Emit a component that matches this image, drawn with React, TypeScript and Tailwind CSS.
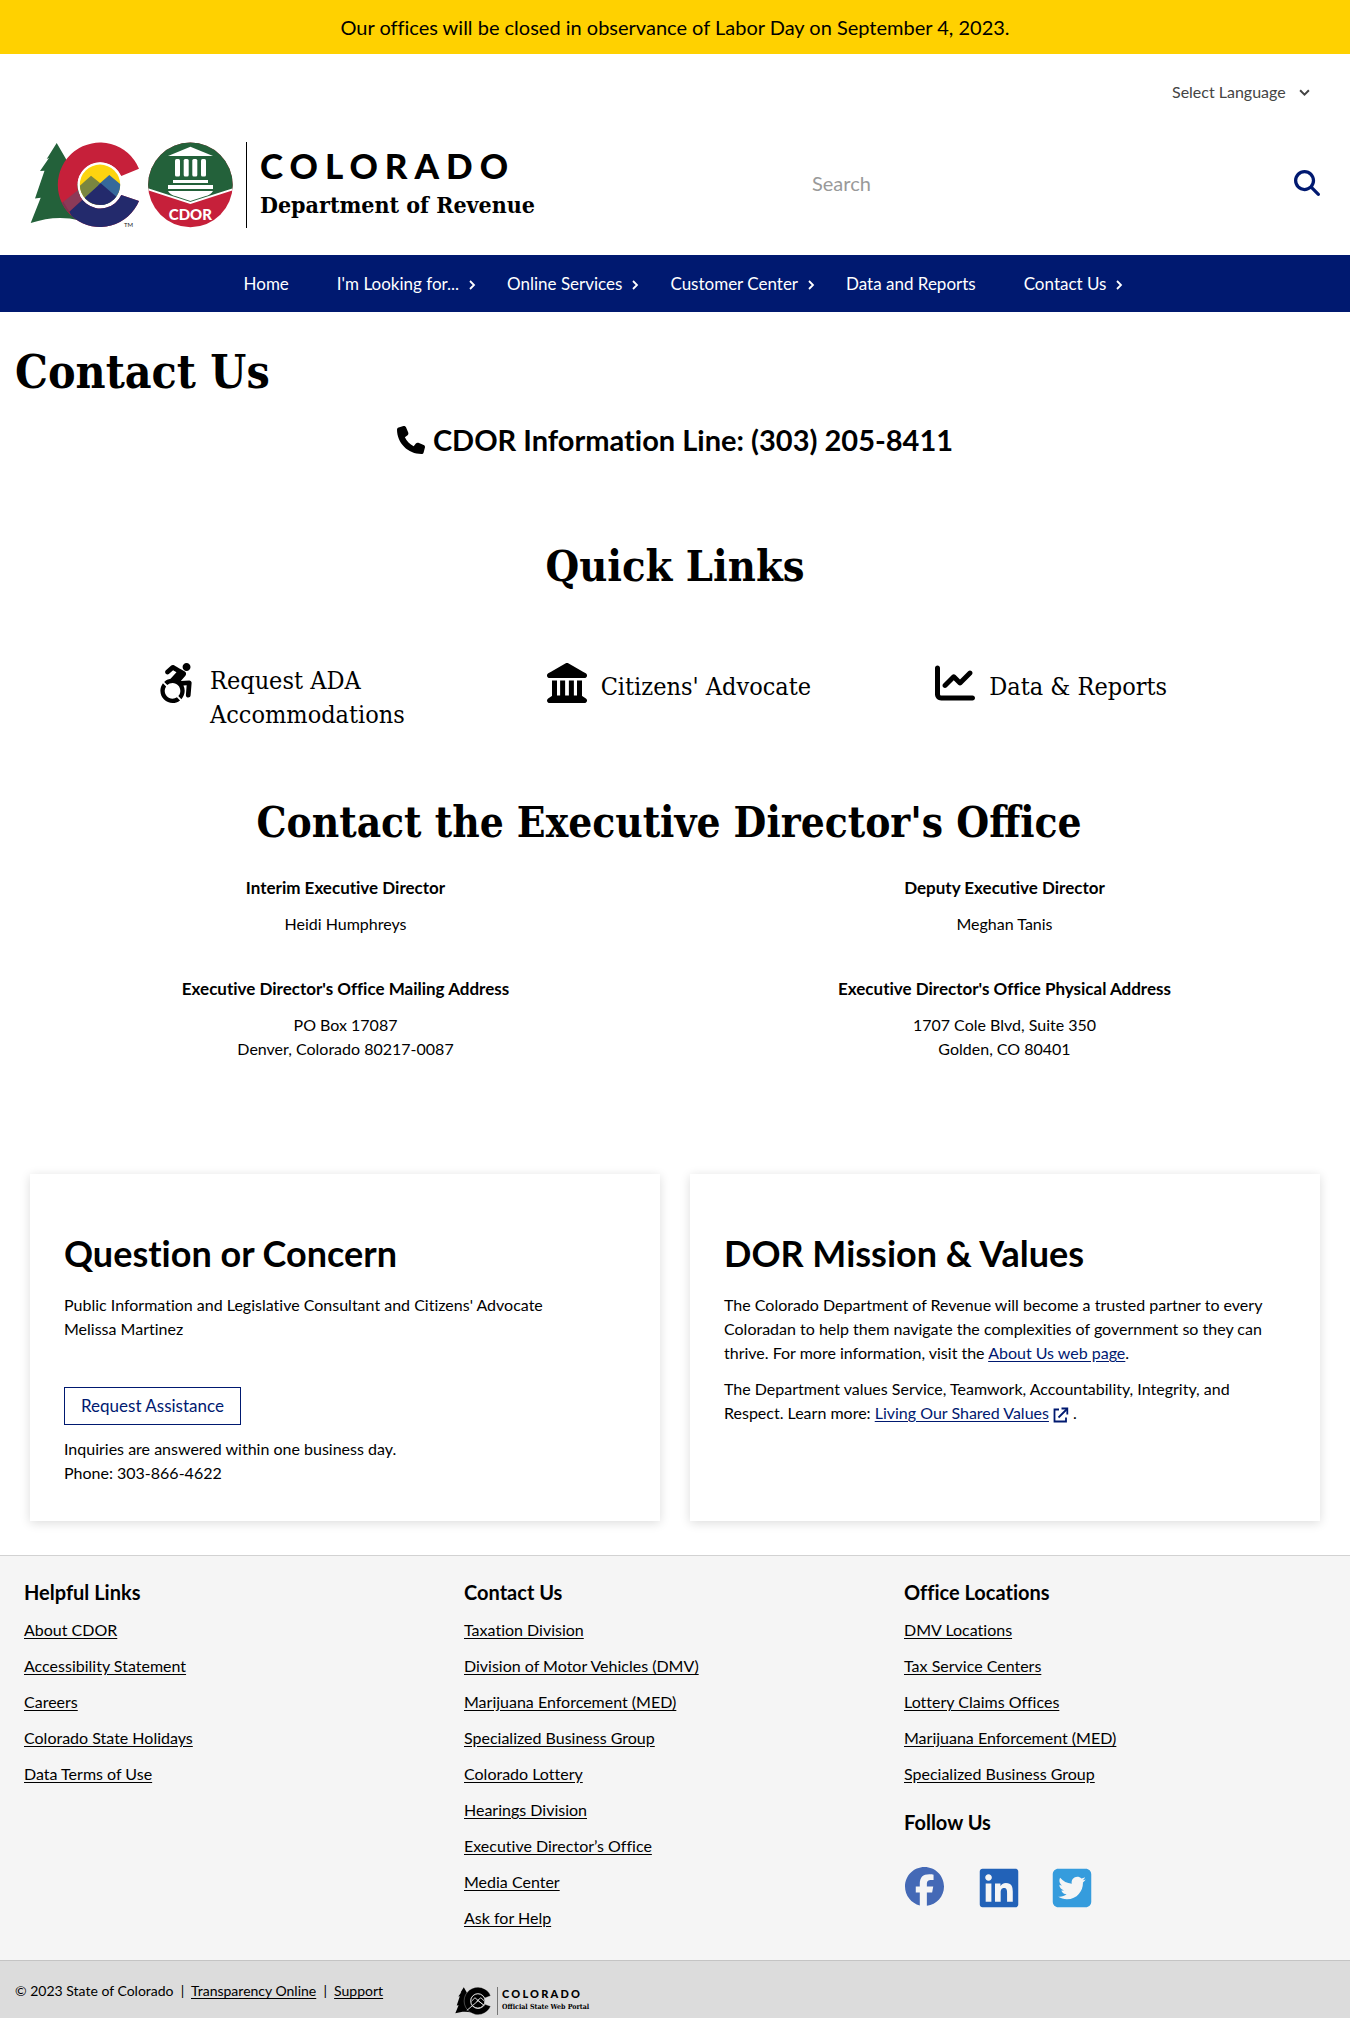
import React from "react";
import {
  FaAccessibleIcon,
  FaChartLine,
  FaFacebook,
  FaLandmark,
  FaLinkedin,
  FaMagnifyingGlass,
  FaPhone,
  FaSquareTwitter,
} from "react-icons/fa6";

const SLAB = "font-['DejaVu_Serif_Condensed','DejaVu_Serif',serif] [font-variant-ligatures:normal]";

const navItems = [
  { label: "Home", menu: false },
  { label: "I'm Looking for...", menu: true },
  { label: "Online Services", menu: true },
  { label: "Customer Center", menu: true },
  { label: "Data and Reports", menu: false },
  { label: "Contact Us", menu: true },
];

const helpfulLinks = [
  "About CDOR",
  "Accessibility Statement",
  "Careers",
  "Colorado State Holidays",
  "Data Terms of Use",
];
const contactLinks = [
  "Taxation Division",
  "Division of Motor Vehicles (DMV)",
  "Marijuana Enforcement (MED)",
  "Specialized Business Group",
  "Colorado Lottery",
  "Hearings Division",
  "Executive Director’s Office",
  "Media Center",
  "Ask for Help",
];
const officeLinks = [
  "DMV Locations",
  "Tax Service Centers",
  "Lottery Claims Offices",
  "Marijuana Enforcement (MED)",
  "Specialized Business Group",
];

const TREE =
  "M26.7 0 L36 16 L50 45 L50 77.5 C32 73 17 75 0.7 80 L10.7 54.7 L5 55.5 L14.5 27.7 L10 28 L19 15 L16.7 16 Z";
const LETTER_C =
  "M109 25.7 A42.2 42.2 0 1 0 109 57.9 L91.3 52 A23 23 0 1 1 91.3 33 Z";

function StateEmblem() {
  return (
    <svg viewBox="0 -1 204 86" className="h-[86px] w-[204px] shrink-0" role="img" aria-label="Colorado CDOR">
      <defs>
        <clipPath id="c-shape">
          <path d={LETTER_C} />
        </clipPath>
        <clipPath id="c-core">
          <circle cx="70" cy="41.8" r="20.2" />
        </clipPath>
        <clipPath id="seal">
          <circle cx="160.4" cy="41.9" r="42.3" />
        </clipPath>
      </defs>
      <path d={TREE} fill="#23613a" />
      <g clipPath="url(#c-shape)">
        <rect x="25" y="-1" width="90" height="86" fill="#c6203a" />
        <path d="M33.3 58.7 L51.7 44.3 L56 54 L39.3 68.7 Z" fill="#8b3a58" />
        <path d="M33.3 58.7 L24 66 L34 73 L39.3 68.7 Z" fill="#7d3352" />
        <path d="M39.3 68.7 L53.3 56 L60 48 L92 48 L118 58 V90 H50 Z" fill="#232a6c" />
      </g>
      <circle cx="70" cy="41.8" r="22.5" fill="#fff" />
      <g clipPath="url(#c-core)">
        <rect x="48" y="20" width="46" height="46" fill="#fdd40f" />
        <path d="M40 51.5 L61 32.7 L75 44 L60 66 H40 Z" fill="#7a8640" />
        <path d="M68 42 L79.3 32 L96 46 V66 H72 Z" fill="#36699a" />
        <path d="M44 64 L53.3 56 L70.7 40.3 L96 62 V68 H44 Z" fill="#232a6c" />
      </g>
      <text x="94" y="83.5" fontSize="6" fontFamily="Lato, sans-serif" fill="#222">TM</text>
      <g clipPath="url(#seal)">
        <rect x="117" y="-1" width="88" height="87" fill="#c6203a" />
        <path d="M117 -1 H204 V46 L160.4 60 L117 46 Z" fill="#23613a" />
        <path d="M117 46 L160.4 60 L204 46" fill="none" stroke="#fff" strokeWidth="2" />
      </g>
      <g fill="#fff">
        <path d="M160.4 3.7 L183 13 H138 Z" />
        <rect x="145" y="16" width="5" height="17.5" rx="1.5" />
        <rect x="153.7" y="16" width="5" height="17.5" rx="1.5" />
        <rect x="162.3" y="16" width="5" height="17.5" rx="1.5" />
        <rect x="171" y="16" width="5" height="17.5" rx="1.5" />
        <rect x="143" y="37" width="35" height="3" />
        <rect x="138" y="42" width="45" height="4" />
        <path d="M138 48 H183 Q181 52 175 53.2 L160.4 58 L146 53.2 Q140 52 138 48 Z" />
      </g>
      <text x="160.4" y="76.5" fontSize="15" fontWeight="900" textAnchor="middle" fontFamily="Lato, sans-serif" fill="#fff">
        CDOR
      </text>
    </svg>
  );
}

function PortalMark() {
  return (
    <svg viewBox="0 -1 110 86" className="h-7 w-9 shrink-0" role="img" aria-label="Colorado">
      <path d={TREE} fill="#000" />
      <path d={LETTER_C} fill="#000" stroke="#dcdcdc" strokeWidth="1" />
      <circle cx="70" cy="41.8" r="22" fill="#000" stroke="#dcdcdc" strokeWidth="3" />
      <path d="M36 71 L71 41 L90 56 M50 43 L61 32 L84 52 M66 43 L79 32 L91 43" fill="none" stroke="#dcdcdc" strokeWidth="3" />
    </svg>
  );
}

function Chevron({ className }: { className: string }) {
  return (
    <svg viewBox="0 0 10 10" className={className} fill="none" stroke="currentColor" strokeWidth="1.8" aria-hidden="true">
      <path d="M3 1 L7 5 L3 9" />
    </svg>
  );
}

function ExternalMark() {
  return (
    <svg viewBox="0 0 16 16" className="mx-1 inline h-4 w-4 align-[-4px]" fill="none" stroke="currentColor" strokeWidth="1.8" aria-label="(external link)">
      <path d="M6 2.5 H1.5 V14.5 H13 V10.5" />
      <path d="M5.5 10.5 L14 2" />
      <path d="M8.5 1.5 H14.3 V7.5" />
    </svg>
  );
}

function LinkList({ links }: { links: string[] }) {
  return (
    <ul className="mt-3 space-y-3">
      {links.map((l) => (
        <li key={l}>
          <a href="#" className="underline underline-offset-2">{l}</a>
        </li>
      ))}
    </ul>
  );
}

function Fact({ title, lines }: { title: string; lines: string[] }) {
  return (
    <div className="text-center">
      <h3 className="mb-3 text-[17px] leading-6 font-bold">{title}</h3>
      {lines.map((l) => (
        <p key={l}>{l}</p>
      ))}
    </div>
  );
}

export default function App() {
  return (
    <div className="bg-white font-[Lato,sans-serif] text-base leading-6 text-black [font-variant-ligatures:no-common-ligatures]">
      <div className="bg-[#ffd100] px-4 py-3 text-center text-xl leading-[30px]">
        Our offices will be closed in observance of Labor Day on September 4, 2023.
      </div>

      <header>
        <div className="flex justify-end pt-[26px] pr-10">
          <div className="relative flex items-center text-[#444]">
            <select aria-label="Select Language" className="appearance-none bg-transparent pr-6 leading-6">
              <option>Select Language</option>
            </select>
            <Chevron className="pointer-events-none absolute right-0 size-[11px] rotate-90" />
          </div>
        </div>
        <div className="flex items-center justify-between px-[30px] pt-[38px] pb-[27px]">
          <a href="#" className="flex items-center">
            <StateEmblem />
            <span className="ml-3 flex h-[86px] flex-col justify-center border-l border-black pl-[13px]">
              <span className="text-[35px] leading-9 font-black tracking-[0.2em]">COLORADO</span>
              <span className={`${SLAB} pt-1 text-[23px] leading-9 font-bold`}>Department of Revenue</span>
            </span>
          </a>
          <form className="flex w-[508px] items-center pb-1" onSubmit={(e) => e.preventDefault()}>
            <input aria-label="Search" placeholder="Search" className="h-12 min-w-0 flex-1 text-xl outline-none placeholder:text-[#999]" />
            <button aria-label="Submit search" className="text-[#001970]">
              <FaMagnifyingGlass className="size-[26px]" />
            </button>
          </form>
        </div>
        <nav className="flex h-[57px] items-center justify-center bg-[#001970] text-[17px] text-white" aria-label="Main">
          {navItems.map((n) => (
            <a key={n.label} href="#" className="relative px-6">
              {n.label}
              {n.menu && <Chevron className="absolute top-2 right-1.5 size-[10px]" />}
            </a>
          ))}
        </nav>
      </header>

      <main>
        <h1 className={`${SLAB} px-[15px] pt-8 text-[46px] leading-[56px] font-bold`}>Contact Us</h1>
        <h2 className="mt-5 flex items-center justify-center gap-2 text-[29px] leading-10 font-bold">
          <FaPhone className="size-7" />
          CDOR Information Line: (303) 205-8411
        </h2>
        <h2 className={`${SLAB} mt-20 text-center text-[43px] leading-[52px] font-bold`}>Quick Links</h2>

        <div className={`${SLAB} mt-[71px] grid grid-cols-3 px-[92px] text-[25px] leading-[34px]`}>
          <a href="#" className="flex items-start gap-3.5 pl-16">
            <FaAccessibleIcon className="size-10 shrink-0" />
            <span className="pt-px">Request ADA Accommodations</span>
          </a>
          <a href="#" className="flex items-start gap-3.5 pl-[66px]">
            <FaLandmark className="size-10 shrink-0" />
            <span className="pt-[7px] whitespace-nowrap">Citizens' Advocate</span>
          </a>
          <a href="#" className="flex items-start gap-3.5 pl-[66px]">
            <FaChartLine className="size-10 shrink-0" />
            <span className="pt-[7px] whitespace-nowrap">Data &amp; Reports</span>
          </a>
        </div>

        <h2 className={`${SLAB} mt-[65px] pr-3 text-center text-[42px] leading-[52px] font-bold`}>
          Contact the Executive Director's Office
        </h2>
        <div className="mt-[27px] grid grid-cols-2 gap-y-[41px] px-4">
          <Fact title="Interim Executive Director" lines={["Heidi Humphreys"]} />
          <Fact title="Deputy Executive Director" lines={["Meghan Tanis"]} />
          <Fact title="Executive Director's Office Mailing Address" lines={["PO Box 17087", "Denver, Colorado 80217-0087"]} />
          <Fact title="Executive Director's Office Physical Address" lines={["1707 Cole Blvd, Suite 350", "Golden, CO 80401"]} />
        </div>

        <div className="mt-[113px] mb-[34px] grid grid-cols-2 gap-[30px] px-[30px]">
          <section className="bg-white px-[34px] pt-[54px] pb-9 shadow-[0_2px_10px_rgba(0,0,0,0.14)]">
            <h2 className="mb-[15px] text-[36px] leading-[50px] font-bold">Question or Concern</h2>
            <p>Public Information and Legislative Consultant and Citizens' Advocate</p>
            <p>Melissa Martinez</p>
            <a href="#" className="mt-[46px] mb-3 inline-flex h-[38px] items-center border border-[#001970] px-4 text-[17px] text-[#001970]">
              Request Assistance
            </a>
            <p>Inquiries are answered within one business day.</p>
            <p>Phone: 303-866-4622</p>
          </section>
          <section className="bg-white px-[34px] pt-[54px] pb-9 shadow-[0_2px_10px_rgba(0,0,0,0.14)]">
            <h2 className="mb-[15px] text-[36px] leading-[50px] font-bold">DOR Mission &amp; Values</h2>
            <p>
              The Colorado Department of Revenue will become a trusted partner to every
              <br />
              Coloradan to help them navigate the complexities of government so they can
              <br />
              thrive. For more information, visit the{" "}
              <a href="#" className="text-[#001970] underline underline-offset-2">About Us web page</a>.
            </p>
            <p className="mt-3">
              The Department values Service, Teamwork, Accountability, Integrity, and
              <br />
              Respect. Learn more:{" "}
              <a href="#" className="text-[#001970]">
                <span className="underline underline-offset-2">Living Our Shared Values</span>
                <ExternalMark />
              </a>
              .
            </p>
          </section>
        </div>
      </main>

      <footer>
        <div className="grid grid-cols-3 border-t border-[#d2d2d2] bg-[#f5f5f5] px-[15px] pt-[22px] pb-[30px]">
          <div className="pl-[9px]">
            <h3 className="text-xl leading-7 font-bold">Helpful Links</h3>
            <LinkList links={helpfulLinks} />
          </div>
          <div className="pl-[9px]">
            <h3 className="text-xl leading-7 font-bold">Contact Us</h3>
            <LinkList links={contactLinks} />
          </div>
          <div className="pl-[9px]">
            <h3 className="text-xl leading-7 font-bold">Office Locations</h3>
            <LinkList links={officeLinks} />
            <h3 className="mt-[22px] text-xl leading-7 font-bold">Follow Us</h3>
            <div className="mt-[30px] flex gap-[33px]">
              <a href="#" aria-label="Facebook" className="grid size-10 place-items-center"><FaFacebook className="size-[39px] text-[#4469b6]" /></a>
              <a href="#" aria-label="LinkedIn" className="grid size-10 place-items-center"><FaLinkedin className="size-11 text-[#2262b8]" /></a>
              <a href="#" aria-label="Twitter" className="grid size-10 place-items-center"><FaSquareTwitter className="size-11 text-[#359cdd]" /></a>
            </div>
          </div>
        </div>
        <div className="grid grid-cols-3 border-t border-[#c4c4c4] bg-[#dcdcdc] px-[15px] pb-1 text-sm">
          <p className="pt-5">
            © 2023 State of Colorado&nbsp; |&nbsp;{" "}
            <a href="#" className="underline underline-offset-2">Transparency Online</a>&nbsp; |&nbsp;{" "}
            <a href="#" className="underline underline-offset-2">Support</a>
          </p>
          <a href="#" className="flex items-center self-start pt-[26px]">
            <PortalMark />
            <span className="ml-1.5 flex h-7 flex-col justify-center border-l border-[#777] pl-1">
              <span className="text-[11px] leading-3 font-black tracking-[0.2em]">COLORADO</span>
              <span className={`${SLAB} text-[7px] leading-[14px] font-bold`}>Official State Web Portal</span>
            </span>
          </a>
        </div>
      </footer>
    </div>
  );
}
